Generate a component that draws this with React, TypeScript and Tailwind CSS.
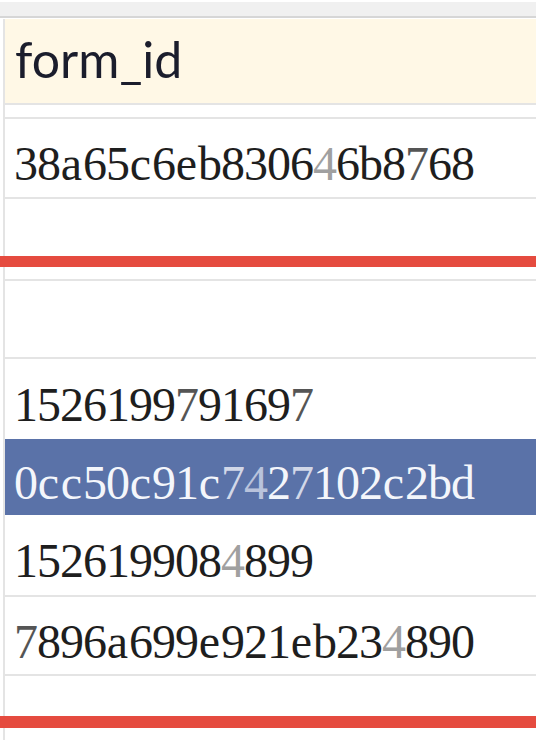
const mono = { fontFamily: "'Liberation Serif', 'Times New Roman', serif" };

function Cells({ text, selected }: { text: string; selected?: boolean }) {
  return (
    <div className="flex">
      {text.split("").map((ch, i) => {
        let color = selected ? "text-[#f4f6fb]" : "text-[#1e1e1e]";
        if (ch === "4") color = selected ? "text-[#b9c3dc]" : "text-[#a0a0a0]";
        if (ch === "7") color = selected ? "text-[#d2d8e8]" : "text-[#555555]";
        return (
          <span key={i} className={`inline-block w-[23px] text-center ${color}`}>
            {ch}
          </span>
        );
      })}
    </div>
  );
}

function Cell({
  height,
  text,
  selected,
  bottomLine = true,
}: {
  height: string;
  text?: string;
  selected?: boolean;
  bottomLine?: boolean;
}) {
  return (
    <div className={`ml-[3px] border-l-2 border-[#e4e4e4] ${bottomLine ? "border-b-2" : ""}`}>
      <div
        className={`${height} flex items-center pl-[9px] pt-[12px] text-[48px] leading-none ${selected ? "bg-[#5a72a8]" : "bg-white"}`}
        style={mono}
      >
        {text && <Cells text={text} selected={selected} />}
      </div>
    </div>
  );
}

function RedLine({ height }: { height: string }) {
  return <div className={`${height} bg-[#e54b3f]`} />;
}

export default function App() {
  return (
    <div className="w-[536px] h-[740px] bg-white overflow-hidden">
      <div className="h-[2px] bg-white" />
      <div className="h-[16px] bg-[#f0f0f0] border-b-2 border-[#d6d6d6]" />
      <div className="h-[1px] bg-white" />
      <div className="ml-[3px] border-l-2 border-b-2 border-[#e4e4e4]">
        <div
          className="h-[84px] bg-[#fff8e6] flex items-center pl-[10px] pb-[4px] text-[50px] text-[#1b1d2c]"
          style={{ fontFamily: "Lato, 'Noto Sans', sans-serif" }}
        >
          form_id
        </div>
      </div>
      <Cell height="h-[12px]" />
      <Cell height="h-[78px]" text="38a65c6eb830646b8768" />
      <Cell height="h-[57px]" bottomLine={false} />
      <RedLine height="h-[11px]" />
      <Cell height="h-[10px]" />
      <Cell height="h-[76px]" />
      <Cell height="h-[80px]" text="1526199791697" bottomLine={false} />
      <Cell height="h-[76px]" text="0cc50c91c7427102c2bd" selected bottomLine={false} />
      <Cell height="h-[80px]" text="1526199084899" />
      <Cell height="h-[77px]" text="7896a699e921eb234890" />
      <Cell height="h-[40px]" bottomLine={false} />
      <RedLine height="h-[12px]" />
      <div className="ml-[3px] border-l-2 border-[#e4e4e4] h-[20px]" />
    </div>
  );
}
